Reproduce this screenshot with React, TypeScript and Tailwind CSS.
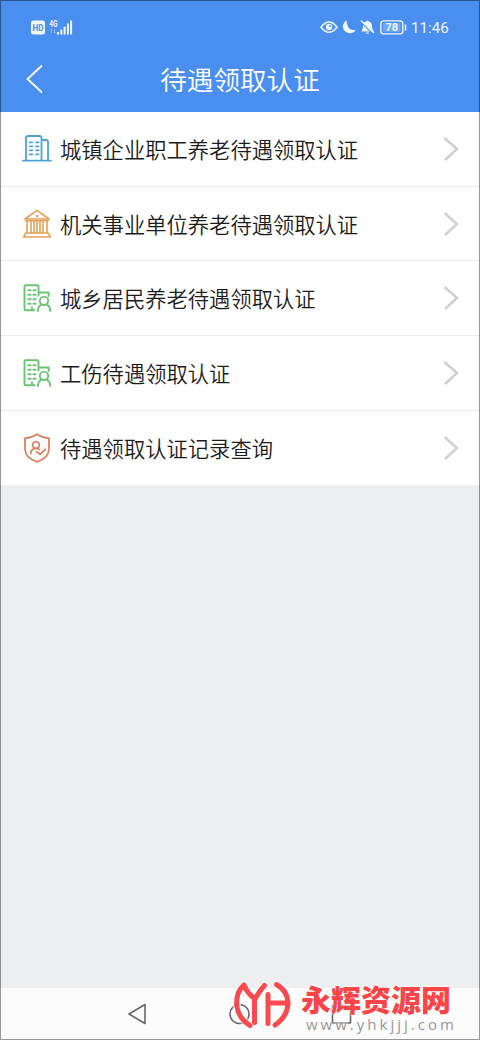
import type { ReactNode } from 'react';

const Building = () => (
  <svg width="30" height="30" viewBox="0 0 30 30" fill="none" stroke="#4ba3d8" strokeWidth="1.8" strokeLinejoin="round" strokeLinecap="round">
    <path d="M1 26.7H29M4 26.7V4Q4 2 6 2H17.5Q19.5 2 19.5 4V26.7M19.5 6H24Q26 6 26 8V26.7" />
    <path d="M7.7 8.3h2.6M14 8.3h2.6M7.7 12.3h2.6M14 12.3h2.6M7.7 16.3h2.6M14 16.3h2.6M7.7 20.3h2.6M14 20.3h2.6" />
  </svg>
);

const Institution = () => (
  <svg width="30" height="30" viewBox="0 0 30 30" fill="none" stroke="#e4a258" strokeWidth="1.6" strokeLinejoin="round" strokeLinecap="round">
    <path d="M15 1.3L27 10H3ZM4 10v1.8h22v-1.8M4 24h22M1.5 28h27M4 24l-2.5 4M26 24l2.5 4" />
    <path d="M5 12v12M9 12v12M12 12v12M18 12v12M21 12v12M25 12v12M15 12v12" />
    <circle cx="15" cy="7" r="1.3" fill="#e4a258" stroke="none" />
  </svg>
);

const Resident = () => (
  <svg width="30" height="30" viewBox="0 0 30 30" fill="none" stroke="#6bc476" strokeWidth="1.9" strokeLinejoin="round" strokeLinecap="round">
    <path d="M12.5 27.3H3.5Q2.5 27.3 2.5 26.3V3.5Q2.5 2.3 3.7 2.3H15.3Q16.5 2.3 16.5 3.5V12.5M16.5 9.5H26.7V13M10 27V24.5" />
    <path d="M6.3 7.2h2.4M11.4 7.2h2.2M6.3 11.7h2.4M11.4 11.7h2.2M6.3 16.2h2.4M11.4 16.2h2.2M6.3 20.8h2.4M11.4 20.8h2.2" />
    <circle cx="22" cy="17.8" r="4.2" />
    <path d="M16 28q0-4.2 3-6.2M28.3 28q0-4.2-3-6.2" />
  </svg>
);

const Shield = () => (
  <svg width="30" height="30" viewBox="0 0 30 30" fill="none" stroke="#d98260" strokeWidth="1.8" strokeLinejoin="round" strokeLinecap="round">
    <path d="M15 1.3Q20 4.8 27 5.2V16Q26.8 25 15 28.8Q3.2 25 3 16V5.2Q10 4.8 15 1.3Z" />
    <circle cx="14" cy="12" r="3.4" />
    <path d="M8.7 20.5q.5-5 5.3-5.1q2 0 3.2 1M14.5 18.7l3.7 2.6 5.1-5" />
  </svg>
);

const rows: { label: string; icon: ReactNode }[] = [
  { label: '城镇企业职工养老待遇领取认证', icon: <Building /> },
  { label: '机关事业单位养老待遇领取认证', icon: <Institution /> },
  { label: '城乡居民养老待遇领取认证', icon: <Resident /> },
  { label: '工伤待遇领取认证', icon: <Resident /> },
  { label: '待遇领取认证记录查询', icon: <Shield /> },
];

const StatusBar = () => (
  <div className="flex h-[54px] items-center justify-between pr-[31px] pl-[31px] text-[#eef6ff]">
    <svg width="42" height="18" viewBox="0 0 42 18" fill="currentColor">
      <rect x="0" y="2.5" width="14" height="14" rx="2.5" />
      <text x="7" y="12.6" fontSize="8.5" fontWeight="700" textAnchor="middle" fill="#4a8eef" textLength="11" lengthAdjust="spacingAndGlyphs" className="font-['Roboto',sans-serif]">HD</text>
      <text x="18.3" y="8.8" fontSize="8.5" fontWeight="700" textLength="8.2" lengthAdjust="spacingAndGlyphs" className="font-['Roboto',sans-serif]">4G</text>
      <path d="M20.5 11v4M19.3 12.2l1.2-1.2M23.5 11v4M24.7 13.8L23.5 15" stroke="currentColor" strokeWidth=".8" opacity=".55" fill="none" />
      <path d="M26 14h2v2.5h-2zM29.3 11.5h2v5h-2zM32.6 8.7h2v7.8h-2zM35.9 5.5h2v11h-2zM39.1 2.5h2v14h-2z" />
    </svg>
    <div className="flex items-center">
      <svg width="87" height="18" viewBox="0 0 87 18" fill="none" stroke="currentColor">
        <path d="M1 9.2Q9 -1.1 17 9.2Q9 19.3 1 9.2Z" strokeWidth="1.6" />
        <circle cx="9" cy="9" r="3.2" fill="currentColor" stroke="none" />
        <circle cx="10" cy="8" r="1" fill="#4a8eef" stroke="none" />
        <path d="M26.4 2.2A7 7 0 1 0 36 11.7Q27.5 14 26.4 2.2Z" fill="currentColor" stroke="none" />
        <path d="M41.3 13.4Q43 11.6 43 8.5Q43 4.2 46.2 3.5Q47.5 1.5 48.8 3.5Q52 4.2 52 8.5Q52 11.6 53.7 13.4ZM45.5 14.6h4q-2 2.6-4 0Z" fill="currentColor" stroke="none" />
        <path d="M41 4L53 15.8" stroke="#4a8eef" strokeWidth="1.2" />
        <path d="M41 2.5L54 15" strokeWidth="1.5" />
        <rect x="60.8" y="2.9" width="22" height="13" rx="3" strokeWidth="1.4" />
        <rect x="63" y="5" width="17.5" height="8.8" rx="1" fill="#70a8f4" stroke="none" />
        <path d="M85.5 6.5v6" strokeWidth="1.5" />
        <text x="71.7" y="13.2" textAnchor="middle" fontSize="11" fontWeight="700" textLength="12.5" lengthAdjust="spacingAndGlyphs" fill="currentColor" stroke="none" className="font-['Roboto',sans-serif]">78</text>
      </svg>
      <span className="mt-[2px] ml-1 w-[38px] font-['Roboto',sans-serif] text-[15px] leading-[18px] tracking-[0.1px] whitespace-nowrap">11:46</span>
    </div>
  </div>
);

const logoPath =
  'M16 9Q8 16 8.7 29Q10 42 22 49.5M16 9Q19 17 27 23Q30 17 36.5 9.5M26.5 24V46.5M40 18.5V47.5M41 27H58M48.5 8.5Q60 15 60 28Q59 41 47 49';

const Watermark = () => (
  <div className="absolute top-[976px] left-[228px] flex">
    <svg width="70" height="60" viewBox="0 0 70 60" fill="none" strokeLinecap="round" strokeLinejoin="round">
      <path d={logoPath} stroke="#fff" strokeWidth="8.5" opacity=".5" />
      <path d={logoPath} stroke="#f94448" strokeWidth="5" opacity=".96" />
    </svg>
    <div className="flex flex-col pt-[7px] pl-[3px]">
      <div className="h-[32px] font-['Noto_Sans_CJK_SC',sans-serif] text-[30px] leading-[30px] font-black text-[#f94448] [text-shadow:0_0_2px_#fff,0_0_3px_#fff]">永辉资源网</div>
      <div className="pl-[5px] font-['Open_Sans',sans-serif] text-[15px] leading-[18px] tracking-[3px] text-[#969696] [text-shadow:0_0_2px_#fff,0_0_3px_#fff]">www.yhkjjj.com</div>
    </div>
  </div>
);

export default function App() {
  return (
    <div className="relative flex h-[1040px] w-[480px] flex-col overflow-hidden bg-[#edeef0] font-['Noto_Sans_CJK_SC',sans-serif]">
      <header className="h-[112px] shrink-0 bg-[#4a8eef]">
        <StatusBar />
        <div className="grid h-[50px] grid-cols-[60px_1fr_60px] items-center text-white">
          <svg className="ml-[25px]" width="20" height="30" viewBox="0 0 20 30" fill="none" stroke="currentColor" strokeWidth="1.8">
            <path d="M17 1.5L2.5 15L17 28.5" />
          </svg>
          <h1 className="text-center text-[26.6px] leading-[50px] font-[350]">待遇领取认证</h1>
        </div>
      </header>
      <main className="flex h-[372.5px] shrink-0 flex-col divide-y-[1.5px] divide-[#ebebed] bg-white">
        {rows.map(({ label, icon }) => (
          <div key={label} className="flex min-h-0 flex-1 items-center pr-[21px] pl-[22px]">
            {icon}
            <span className="ml-2 flex-1 text-[21.3px] leading-8 font-[350] whitespace-nowrap text-[#1c1c1c]">{label}</span>
            <svg width="16" height="26" viewBox="0 0 16 26" fill="none" stroke="#cfcfcf" strokeWidth="2.4">
              <path d="M1.5 2L14 13L2 24" />
            </svg>
          </div>
        ))}
      </main>
      <nav className="mt-auto flex h-[52px] items-center bg-[#fcfcfc]">
        <svg width="480" height="52" viewBox="0 0 480 52" fill="none" stroke="#666" strokeWidth="1.6" strokeLinejoin="round">
          <path d="M129 26L145 16.5V35.5Z" />
          <circle cx="239.5" cy="26" r="9.5" />
          <rect x="332.5" y="17.5" width="18" height="17.5" />
        </svg>
      </nav>
      <Watermark />
      <div className="pointer-events-none absolute inset-0 border border-black/40" />
    </div>
  );
}
